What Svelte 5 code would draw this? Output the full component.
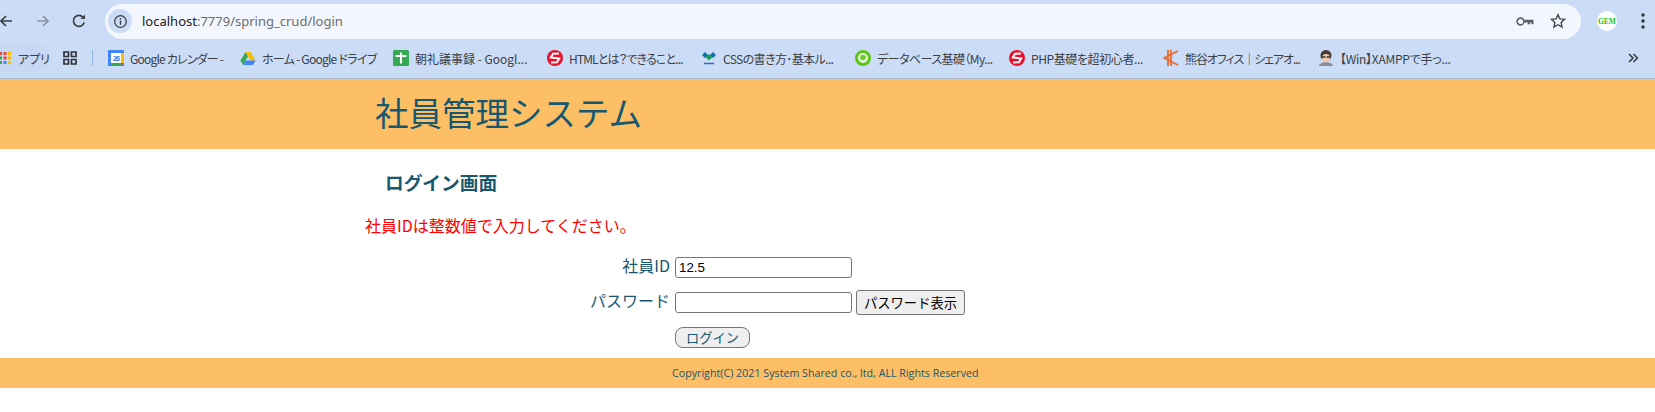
<script lang="ts">
  interface Bookmark {
    label: string
    icon: string
    width: number
    tracking: number
  }

  const bookmarks: Bookmark[] = [
    { label: 'Google カレンダー -', icon: 'cal', width: 132, tracking: -0.8 },
    { label: 'ホーム - Google ドライブ', icon: 'drive', width: 153, tracking: -0.75 },
    { label: '朝礼議事録 - Googl...', icon: 'sheet', width: 154, tracking: 0 },
    { label: 'HTMLとは？できること...', icon: 'red', width: 154, tracking: -0.85 },
    { label: 'CSSの書き方･基本ル...', icon: 'css', width: 154, tracking: -0.6 },
    { label: 'データベース基礎（My...', icon: 'ring', width: 154, tracking: -0.55 },
    { label: 'PHP基礎を超初心者...', icon: 'red', width: 154, tracking: -0.4 },
    { label: '熊谷オフィス｜シェアオ...', icon: 'kuma', width: 155, tracking: -1.1 },
    { label: '【Win】XAMPPで手っ...', icon: 'face', width: 150, tracking: -0.27 },
  ]
</script>

<div class="browser">
  <div class="toolbar">
    <svg class="nav" viewBox="0 0 16 16" width="16" height="16"><path d="M14 8H3M8 3L3 8l5 5" fill="none" stroke="#3a3d42" stroke-width="1.7" /></svg>
    <svg class="nav forward" viewBox="0 0 16 16" width="16" height="16"><path d="M2 8h11M8 3l5 5-5 5" fill="none" stroke="#8e939b" stroke-width="1.7" /></svg>
    <svg class="nav reload" viewBox="0 0 16 16" width="16" height="16"><path d="M13.2 9.5A5.5 5.5 0 1 1 12 4.2" fill="none" stroke="#3a3d42" stroke-width="1.7" /><path d="M14 1.5V6H9.500z" fill="#3a3d42" /></svg>
    <div class="omnibox">
      <span class="info">
        <svg viewBox="0 0 16 16" width="15" height="15"><circle cx="8" cy="8" r="6.200" fill="none" stroke="#3c4043" stroke-width="1.400" /><path d="M8 7v4.500M8 4.300v1.500" stroke="#3c4043" stroke-width="1.500" /></svg>
      </span>
      <span class="url"><span class="host">localhost</span>:7779/spring_crud/login</span>
      <svg class="key" viewBox="0 0 20 12" width="18" height="11"><circle cx="5" cy="6" r="3.800" fill="none" stroke="#5f6368" stroke-width="1.800" /><path d="M9 4h10.500v5H17V7h-1.500v2H13V7H9z" fill="#5f6368" /></svg>
      <svg class="star" viewBox="0 0 16 16" width="16" height="16"><path d="M8 1.700l1.900 4.200 4.600.5-3.400 3.100.9 4.500L8 11.700l-4 2.300.9-4.500L1.500 6.400l4.600-.5z" fill="none" stroke="#45484d" stroke-width="1.400" /></svg>
    </div>
    <span class="avatar">GEM</span>
    <svg class="menu" viewBox="0 0 4 16" width="4" height="16"><circle cx="2" cy="2" r="1.700" /><circle cx="2" cy="8" r="1.700" /><circle cx="2" cy="14" r="1.700" /></svg>
  </div>

  <div class="bookmarks">
    <div class="apps">
      <svg viewBox="0 0 12 12" width="12" height="12">
        <rect x="-1" y="0" width="3" height="3" fill="#ea4335" /><rect x="3.500" y="0" width="3" height="3" fill="#ea4335" /><rect x="8" y="0" width="3" height="3" fill="#fbbc04" />
        <rect x="-1" y="4.500" width="3" height="3" fill="#34a853" /><rect x="3.500" y="4.500" width="3" height="3" fill="#ea4335" /><rect x="8" y="4.500" width="3" height="3" fill="#fbbc04" />
        <rect x="-1" y="9" width="3" height="3" fill="#34a853" /><rect x="3.500" y="9" width="3" height="3" fill="#4285f4" /><rect x="8" y="9" width="3" height="3" fill="#fbbc04" />
      </svg>
      <span>アプリ</span>
    </div>
    <svg class="grid" viewBox="0 0 14 14" width="14" height="14">
      <path d="M1 1h4.500v4.500H1zM8.500 1H13v4.500H8.500zM1 8.500h4.500V13H1zM8.500 8.500H13V13H8.500z" fill="none" stroke="#2f3236" stroke-width="1.700" />
    </svg>
    <span class="sep"></span>
    {#each bookmarks as b}
      <div class="bookmark" style="width: {b.width}px; letter-spacing: {b.tracking}px">
        {#if b.icon === 'cal'}
          <svg viewBox="0 0 16 16" width="16" height="16"><path d="M0 0h16v16H0z" fill="#4285f4" /><path d="M3 3h10v10H3z" fill="#fff" /><path d="M13 3h3v10h-3z" fill="#fbbc04" /><path d="M3 13h10v3H3z" fill="#34a853" /><path d="M13 13h3l-3 3z" fill="#ea4335" /><text x="8" y="11" text-anchor="middle" class="cal-num">26</text></svg>
        {:else if b.icon === 'drive'}
          <svg viewBox="0 0 16 15" width="16" height="15"><path d="M5.500 1h5l5 8.500h-5z" fill="#fbbc04" /><path d="M5.500 1L.5 9.500 3 14l5-8.500z" fill="#34a853" /><path d="M3 14h10l2.500-4.500h-10z" fill="#4285f4" /></svg>
        {:else if b.icon === 'sheet'}
          <svg viewBox="0 0 16 16" width="16" height="16"><rect width="16" height="16" rx="1.500" fill="#34a853" /><path d="M2.500 6h11M8 2.500v11" stroke="#fff" stroke-width="2" /></svg>
        {:else if b.icon === 'red'}
          <svg viewBox="0 0 16 16" width="16" height="16"><circle cx="8" cy="8" r="8" fill="#e8112d" /><path d="M12 3.500L6 3.800 3.800 7.500l4.200.5M4 12.500l6-.3 2.200-3.700L8 8" fill="none" stroke="#fff" stroke-width="2" /></svg>
        {:else if b.icon === 'css'}
          <svg viewBox="0 0 16 16" width="16" height="16"><path d="M1 5l3-3 3 3-3 3zM9 5l3-3 3 3-3 3z" fill="#0f6fa8" /><path d="M4.500 7l3.500-3 3.500 3L8 10.500z" fill="#1d9a5b" /><path d="M3 13.500h10" stroke="#3b6ea5" stroke-width="1.500" /></svg>
        {:else if b.icon === 'ring'}
          <svg viewBox="0 0 16 16" width="16" height="16"><circle cx="8" cy="8" r="6.500" fill="#e9f5df" stroke="#5fc414" stroke-width="3" /><circle cx="8" cy="7.500" r="2.800" fill="#6fca25" /></svg>
        {:else if b.icon === 'kuma'}
          <svg viewBox="0 0 16 16" width="16" height="16"><path d="M5 0v16M8 0v16M15 1L1 8l14 7" fill="none" stroke="#ea6a2e" stroke-width="1.800" /></svg>
        {:else}
          <svg viewBox="0 0 16 16" width="16" height="16"><path d="M1 16c0-5 14-5 14 0z" fill="#8c8f95" /><circle cx="8" cy="5.500" r="5.500" fill="#4a3a32" /><circle cx="8" cy="8" r="4" fill="#eec9b2" /><path d="M4 7h3.400M8.600 7H12" stroke="#333" stroke-width="1.300" /></svg>
        {/if}
        <span>{b.label}</span>
      </div>
    {/each}
    <svg class="more" viewBox="0 0 10 10" width="10" height="10"><path d="M1 1l4 4-4 4M5.500 1l4 4-4 4" fill="none" stroke="#33363a" stroke-width="1.500" /></svg>
  </div>
</div>

<header class="site-header">
  <h1>社員管理システム</h1>
</header>

<main class="content">
  <h2>ログイン画面</h2>
  <p class="error">社員IDは整数値で入力してください。</p>
  <form class="login">
    <label for="emp-id">社員ID</label>
    <input id="emp-id" type="text" value="12.5" />
    <span></span>
    <label for="emp-pass">パスワード</label>
    <input id="emp-pass" type="password" />
    <button type="button" class="show">パスワード表示</button>
    <span></span>
    <button type="button" class="submit">ログイン</button>
  </form>
</main>

<footer class="site-footer">Copyright(C) 2021 System Shared co., ltd, ALL Rights Reserved</footer>

<style>
  :global(body) {
    margin: 0;
    background: #fff;
    font-family: "Noto Sans CJK JP", "Noto Sans", sans-serif;
  }

  .browser {
    background: #cbdcf7;
    height: 79px;
    box-sizing: border-box;
    border-bottom: 1px solid #a9bad3;
    overflow: hidden;
  }

  .toolbar {
    display: flex;
    align-items: center;
    height: 39px;
    padding-top: 3px;
    box-sizing: border-box;
  }

  .nav {
    flex: none;
    margin-left: -2px;
  }

  .forward {
    margin-left: 21px;
  }

  .reload {
    margin-left: 20px;
  }

  .omnibox {
    display: flex;
    align-items: center;
    flex: none;
    width: 1476px;
    height: 35px;
    margin-left: 18px;
    background: #f3f7fd;
    border-radius: 18px;
    box-sizing: border-box;
    padding-left: 3px;
  }

  .info {
    display: flex;
    align-items: center;
    justify-content: center;
    width: 24px;
    height: 24px;
    border-radius: 50%;
    background: #cbdcf7;
    flex: none;
  }

  .url {
    margin-left: 10px;
    font-family: "Noto Sans", sans-serif;
    font-size: 13px;
    color: #6a6d72;
  }

  .host {
    color: #202124;
  }

  .key {
    margin-left: auto;
  }

  .star {
    margin-left: 16px;
    margin-right: 15px;
  }

  .avatar {
    display: flex;
    align-items: center;
    justify-content: center;
    flex: none;
    width: 20px;
    height: 20px;
    margin-left: 16px;
    border-radius: 50%;
    background: #fff;
    color: #18c818;
    font-family: "Liberation Serif", serif;
    font-size: 7.500px;
    font-weight: 700;
  }

  .menu {
    flex: none;
    margin-left: 24px;
    fill: #2f3236;
  }

  .bookmarks {
    display: flex;
    align-items: center;
    height: 38px;
    font-size: 12px;
    font-feature-settings: "palt";
    color: #3c4043;
    white-space: nowrap;
  }

  .apps {
    display: flex;
    align-items: center;
    flex: none;
    gap: 6px;
    width: 50px;
    height: 28px;
    border-radius: 0 14px 14px 0;
    background: #c6d8f3;
  }

  .apps svg {
    overflow: visible;
  }

  .grid {
    flex: none;
    margin-left: 13px;
  }

  .sep {
    flex: none;
    width: 1px;
    height: 16px;
    margin-left: 15px;
    margin-right: 15px;
    background: #8fb3e6;
  }

  .bookmark {
    display: flex;
    align-items: center;
    flex: none;
    gap: 6px;
    overflow: hidden;
  }

  .bookmark svg {
    flex: none;
  }

  .cal-num {
    font-family: "Liberation Sans", sans-serif;
    font-size: 7px;
    font-weight: 700;
    fill: #1a73e8;
  }

  .more {
    flex: none;
    margin-left: 160px;
  }

  .site-header {
    height: 70px;
    background: #fdbf65;
    padding-left: 375px;
    box-sizing: border-box;
  }

  h1 {
    margin: 0;
    font-size: 33.500px;
    font-weight: 400;
    line-height: 66px;
    color: #17576f;
  }

  .content {
    height: 209px;
    padding-top: 22px;
    box-sizing: border-box;
    color: #17576f;
  }

  h2 {
    margin: 0 0 0 385px;
    font-size: 18.700px;
    font-weight: 700;
    line-height: 22px;
  }

  .error {
    margin: 21px 0 0 365px;
    font-size: 16px;
    line-height: 22px;
    color: #f00;
  }

  .login {
    display: grid;
    grid-template-columns: 670px 177px auto;
    grid-template-rows: 21px 21px 21px;
    row-gap: 14px;
    column-gap: 5px;
    align-items: center;
    justify-items: start;
    margin-top: 21px;
  }

  label {
    justify-self: end;
    margin-bottom: 5px;
    font-size: 16px;
  }

  input {
    width: 177px;
    height: 21px;
    box-sizing: border-box;
    padding: 1px 3px;
    border: 1px solid #767676;
    border-radius: 3px;
    font-family: "Liberation Sans", sans-serif;
    font-size: 13.300px;
    color: #000;
    background: #fff;
  }

  button {
    border: 1px solid #767676;
    background: #efefef;
    font-family: "Noto Sans CJK JP", sans-serif;
    font-size: 13.300px;
    padding: 0;
    box-sizing: border-box;
  }

  .show {
    width: 109px;
    height: 25px;
    margin-left: -1px;
    border-radius: 3px;
    color: #000;
  }

  .submit {
    width: 75px;
    height: 21px;
    margin-top: 0;
    border-radius: 8px;
    color: #17576f;
  }

  .site-footer {
    height: 30px;
    background: #fdbf65;
    padding-left: 672px;
    box-sizing: border-box;
    font-family: "Open Sans", "Noto Sans", sans-serif;
    font-size: 10.700px;
    line-height: 30px;
    color: #17576f;
  }
</style>
